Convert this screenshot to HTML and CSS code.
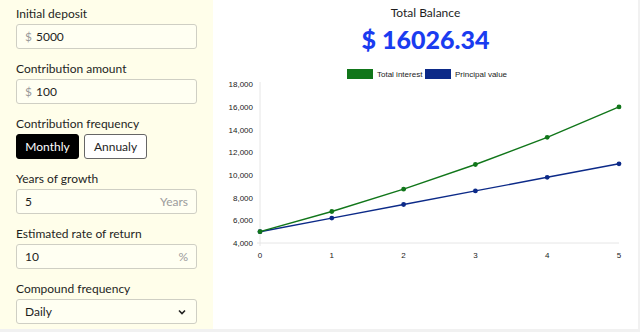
FILE: index.html
```html
<!DOCTYPE html>
<html lang="en">
<head>
  <meta charset="UTF-8">
  <meta name="viewport" content="width=device-width, initial-scale=1.0">
  <link rel="stylesheet" href="styles.css">
  <title>Compound interest</title>
</head>
<body>
  <div class="app">
    <div class="form">
      <div class="field">
        <label>Initial deposit</label>
        <div class="input"><span class="pre">$</span><span class="val">5000</span></div>
      </div>
      <div class="field">
        <label>Contribution amount</label>
        <div class="input"><span class="pre">$</span><span class="val">100</span></div>
      </div>
      <div class="field">
        <label>Contribution frequency</label>
        <div class="toggle">
          <button class="btn active">Monthly</button>
          <button class="btn">Annualy</button>
        </div>
      </div>
      <div class="field">
        <label>Years of growth</label>
        <div class="input"><span class="val">5</span><span class="post">Years</span></div>
      </div>
      <div class="field">
        <label>Estimated rate of return</label>
        <div class="input"><span class="val">10</span><span class="post">%</span></div>
      </div>
      <div class="field">
        <label>Compound frequency</label>
        <div class="input select"><span class="val">Daily</span>
          <svg class="chev" width="8" height="6" viewBox="0 0 8 6"><polyline points="1,1.5 4,4.5 7,1.5" fill="none" stroke="#222" stroke-width="1.6"/></svg>
        </div>
      </div>
    </div>

    <div class="result">
      <div class="title">Total Balance</div>
      <div class="amount">$ 16026.34</div>
      <svg class="chart" width="425" height="269" viewBox="0 0 425 269">
        <rect x="134" y="9" width="26" height="10" fill="#11761a"/>
        <text class="legend" x="164" y="17">Total interest</text>
        <rect x="212" y="9" width="26" height="10" fill="#0c2a88"/>
        <text class="legend" x="242" y="17">Principal value</text>

        <line x1="47" y1="22" x2="47" y2="186" stroke="#e6e6e6"/>
        <line x1="44" y1="183" x2="406" y2="183" stroke="#e6e6e6"/>

        <g class="ylab">
          <text x="40" y="27.4">18,000</text>
          <text x="40" y="50">16,000</text>
          <text x="40" y="72.7">14,000</text>
          <text x="40" y="95.3">12,000</text>
          <text x="40" y="118">10,000</text>
          <text x="40" y="140.6">8,000</text>
          <text x="40" y="163.3">6,000</text>
          <text x="40" y="185.9">4,000</text>
        </g>
        <g class="xlab">
          <text x="47" y="198">0</text>
          <text x="118.8" y="198">1</text>
          <text x="190.6" y="198">2</text>
          <text x="262.4" y="198">3</text>
          <text x="334.2" y="198">4</text>
          <text x="406" y="198">5</text>
        </g>

        <polyline points="47,171.7 118.8,158.1 190.6,144.5 262.4,130.9 334.2,117.3 406,103.8" fill="none" stroke="#0c2a88" stroke-width="1.4"/>
        <g fill="#0c2a88">
          <circle cx="47" cy="171.7" r="2.4"/>
          <circle cx="118.8" cy="158.1" r="2.4"/>
          <circle cx="190.6" cy="144.5" r="2.4"/>
          <circle cx="262.4" cy="130.9" r="2.4"/>
          <circle cx="334.2" cy="117.3" r="2.4"/>
          <circle cx="406" cy="103.8" r="2.4"/>
        </g>

        <polyline points="47,171.7 118.8,151.5 190.6,129.2 262.4,104.5 334.2,77.3 406,46.9" fill="none" stroke="#11761a" stroke-width="1.4"/>
        <g fill="#11761a">
          <circle cx="47" cy="171.7" r="2.4"/>
          <circle cx="118.8" cy="151.5" r="2.4"/>
          <circle cx="190.6" cy="129.2" r="2.4"/>
          <circle cx="262.4" cy="104.5" r="2.4"/>
          <circle cx="334.2" cy="77.3" r="2.4"/>
          <circle cx="406" cy="46.9" r="2.4"/>
        </g>
      </svg>
    </div>
  </div>
</body>
</html>
```
FILE: styles.css
```css
html,body{
  margin:0; padding:0;
}
body{
  background:#f1f1f1; font-family:Lato, "Open Sans", sans-serif; color:#1e1e1e;
}

.app{
  display:flex; width:638px; height:329px; background:#fff;
}

.form{
  width:213px; box-sizing:border-box; padding:6px 16px 0 16px;
  background:#fffeea;
}
.field{
  margin-bottom:12px;
}
.field label{
  display:block; font-size:12px; line-height:16px; margin-bottom:2px;
}

.input{
  display:flex; align-items:center; height:25px; box-sizing:border-box;
  padding:0 8px; border:1px solid #cfcfc4; border-radius:3px;
  background:#fffff2; font-size:12px;
}
.input .pre{
  color:#9a9a9a; margin-right:4px;
}
.input .val{
  flex:1;
}
.input .post{
  color:#9c9c9c;
}
.input.select .chev{
  margin-right:2px;
}

.toggle{
  display:flex; gap:5px;
}
.btn{
  width:63px; height:25px; padding:0; box-sizing:border-box;
  border:1px solid #666; border-radius:3px; background:#fff;
  font-family:Lato, sans-serif; font-size:12px; color:#1e1e1e;
}
.btn.active{
  background:#000; border-color:#000; color:#fff;
}

.result{
  flex:1; display:flex; flex-direction:column; align-items:center;
}
.title{
  font-size:12px; line-height:14px; margin-top:6px;
}
.amount{
  font-size:25px; font-weight:900; color:#1a3cf0; line-height:30px; margin-top:4px;
}
.chart{
  display:block; margin-top:6px;
}
.chart text{
  font-family:"Liberation Sans", Arial, sans-serif; font-size:8px; fill:#222;
}
.chart .ylab text{
  text-anchor:end;
}
.chart .xlab text{
  text-anchor:middle;
}
```
